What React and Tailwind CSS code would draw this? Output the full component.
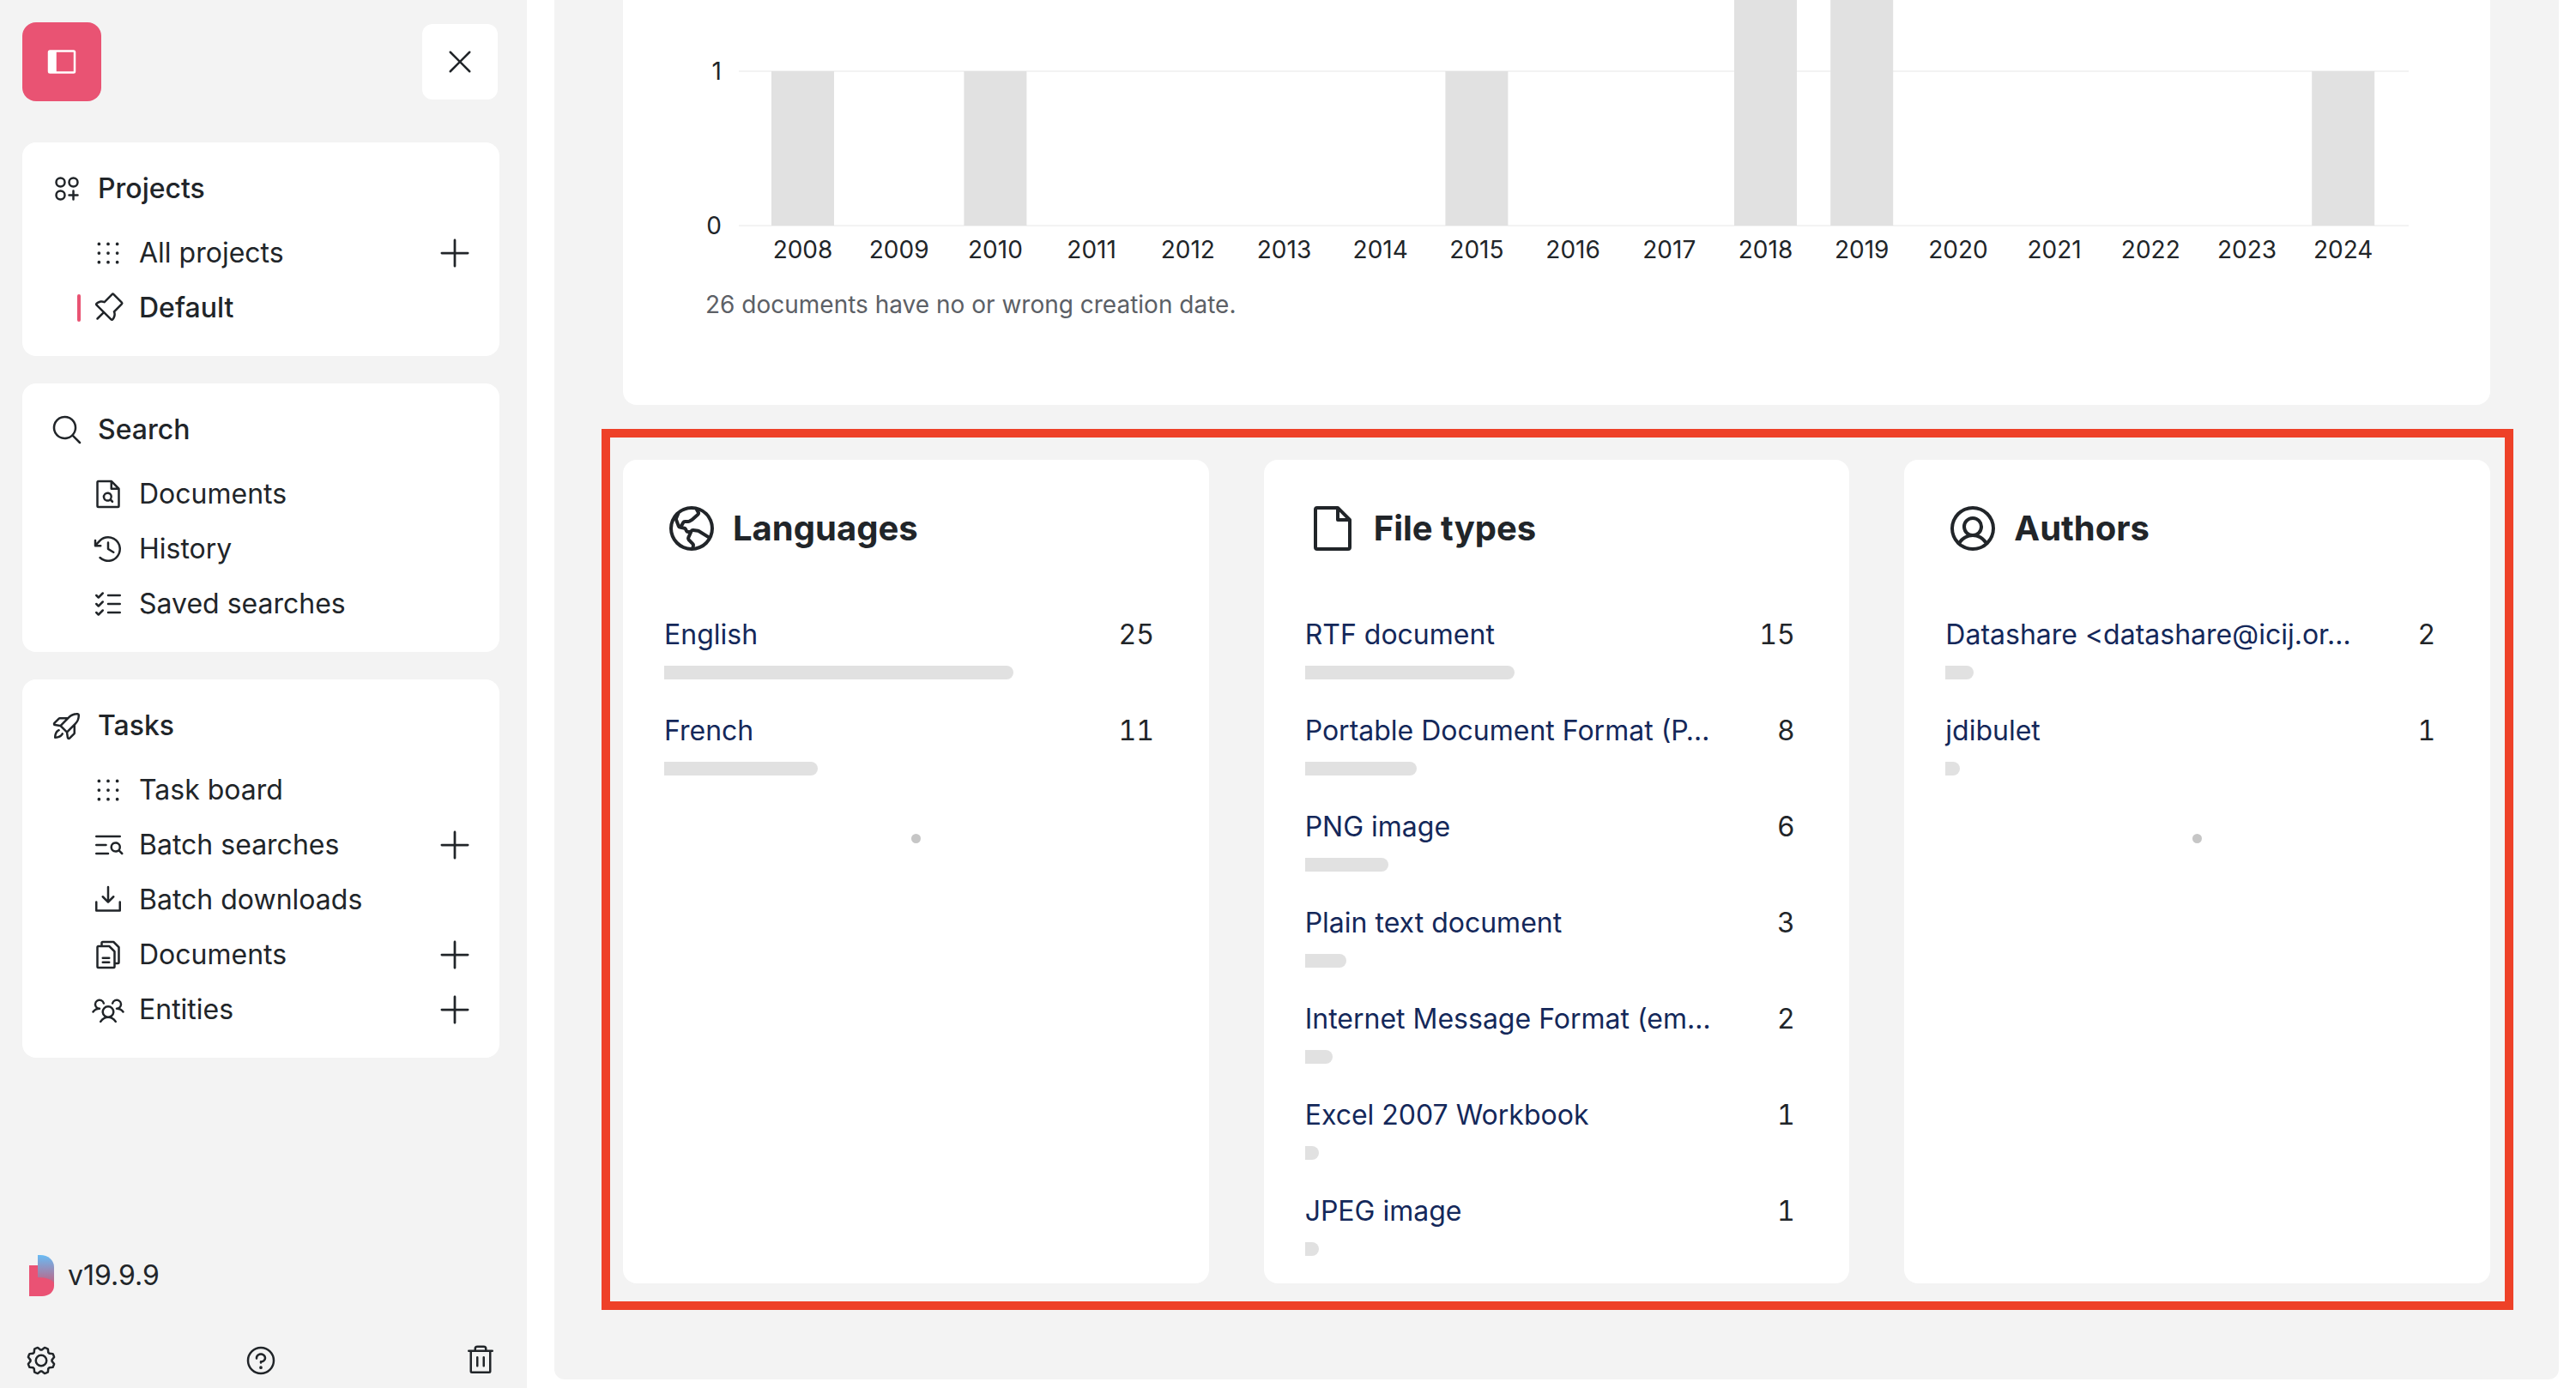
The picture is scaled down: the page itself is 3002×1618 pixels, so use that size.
import React from 'react';
import {
  PiCirclesThreePlus,
  PiClockCounterClockwise,
  PiDotsNine,
  PiDownloadSimple,
  PiFile,
  PiFileMagnifyingGlass,
  PiFiles,
  PiGear,
  PiGlobeHemisphereWest,
  PiListChecks,
  PiListMagnifyingGlass,
  PiMagnifyingGlass,
  PiPlus,
  PiPushPin,
  PiQuestion,
  PiRocketLaunch,
  PiSidebarSimpleFill,
  PiTrash,
  PiUserCircle,
  PiUsersThree,
  PiX,
} from 'react-icons/pi';

const navGroups = [
  {
    title: 'Projects',
    icon: PiCirclesThreePlus,
    items: [
      { label: 'All projects', icon: PiDotsNine, add: true },
      { label: 'Default', icon: PiPushPin, active: true },
    ],
  },
  {
    title: 'Search',
    icon: PiMagnifyingGlass,
    items: [
      { label: 'Documents', icon: PiFileMagnifyingGlass },
      { label: 'History', icon: PiClockCounterClockwise },
      { label: 'Saved searches', icon: PiListChecks },
    ],
  },
  {
    title: 'Tasks',
    icon: PiRocketLaunch,
    items: [
      { label: 'Task board', icon: PiDotsNine },
      { label: 'Batch searches', icon: PiListMagnifyingGlass, add: true },
      { label: 'Batch downloads', icon: PiDownloadSimple },
      { label: 'Documents', icon: PiFiles, add: true },
      { label: 'Entities', icon: PiUsersThree, add: true },
    ],
  },
];

const TOTAL = 36;

const widgets = [
  {
    title: 'Languages',
    icon: PiGlobeHemisphereWest,
    more: true,
    rows: [
      ['English', 25],
      ['French', 11],
    ],
  },
  {
    title: 'File types',
    icon: PiFile,
    rows: [
      ['RTF document', 15],
      ['Portable Document Format (P…', 8],
      ['PNG image', 6],
      ['Plain text document', 3],
      ['Internet Message Format (em…', 2],
      ['Excel 2007 Workbook', 1],
      ['JPEG image', 1],
    ],
  },
  {
    title: 'Authors',
    icon: PiUserCircle,
    more: true,
    rows: [
      ['Datashare <datashare@icij.or…', 2],
      ['jdibulet', 1],
    ],
  },
];

const years = Array.from({ length: 17 }, (_, i) => 2008 + i);
const yearValues = { 2008: 1, 2010: 1, 2015: 1, 2018: 2, 2019: 2, 2024: 1 };

const Logo = () => (
  <svg width="29" height="48" viewBox="0 0 29 48">
    <defs>
      <linearGradient id="logoBlue" x1="0" y1="0" x2="0" y2="1">
        <stop offset="0" stopColor="#68bcf5" />
        <stop offset="1" stopColor="#c2607f" />
      </linearGradient>
    </defs>
    <path d="M10 0h3c9 0 16 6 16 14v20H10z" fill="url(#logoBlue)" />
    <path d="M0 12h10v14c10 0 19 3 19 8v2c0 7-6 12-14 12H0z" fill="#ea5274" />
  </svg>
);

const NavGroup = ({ group }) => {
  const Icon = group.icon;
  return (
    <div className="rounded-2xl bg-white pt-[22px] pr-[30px] pb-6 pl-8">
      <div className="flex h-16 items-center gap-4 font-medium">
        <Icon size={40} />
        <span>{group.title}</span>
      </div>
      <div className="mt-[11px]">
        {group.items.map((item) => (
          <div key={item.label} className="flex h-16 items-center pl-8">
            <div className="w-4">
              {item.active && <div className="h-8 w-1 rounded-sm bg-[#e95373]" />}
            </div>
            <item.icon size={40} />
            <span className={`ml-4 ${item.active ? 'font-medium' : ''}`}>{item.label}</span>
            {item.add && <PiPlus size={44} className="ml-auto" />}
          </div>
        ))}
      </div>
    </div>
  );
};

const Sidebar = () => (
  <aside className="flex h-[1618px] w-[614px] shrink-0 flex-col bg-[#f3f3f3] pt-[26px] pr-8 pb-3 pl-[26px]">
    <div className="flex items-center justify-between pr-0.5">
      <button className="flex h-[92px] w-[92px] items-center justify-center rounded-2xl bg-[#e95373] text-white">
        <PiSidebarSimpleFill size={40} />
      </button>
      <button className="flex h-[88px] w-[88px] items-center justify-center rounded-xl bg-white">
        <PiX size={40} />
      </button>
    </div>
    <div className="mt-12 flex flex-col gap-8">
      {navGroups.map((group) => (
        <NavGroup key={group.title} group={group} />
      ))}
    </div>
    <div className="mt-auto">
      <div className="flex items-center gap-4 pl-2">
        <Logo />
        <span>v19.9.9</span>
      </div>
      <div className="mt-[55px] flex justify-between px-0.5">
        <PiGear size={40} />
        <PiQuestion size={40} />
        <PiTrash size={40} />
      </div>
    </div>
  </aside>
);

const ChartCard = () => (
  <div className="h-[472px] rounded-b-2xl bg-white">
    <svg width="2176" height="320" className="block text-[28px]" fill="#212529">
      <line x1="135" x2="2081" y1="83" y2="83" stroke="#f3f3f3" strokeWidth="2" />
      <line x1="135" x2="2081" y1="263" y2="263" stroke="#f3f3f3" strokeWidth="2" />
      <text x="115" y="93" textAnchor="end">1</text>
      <text x="115" y="273" textAnchor="end">0</text>
      {years.map((year, i) => {
        const x = 173 + i * 112.2;
        const height = (yearValues[year] || 0) * 180;
        return (
          <g key={year}>
            {height > 0 && <rect x={x} y={263 - height} width="73" height={height} fill="#e1e1e1" />}
            <text x={x + 36.5} y="301" textAnchor="middle">{year}</text>
          </g>
        );
      })}
    </svg>
    <p className="mt-[15px] pl-24 text-[28px] leading-10 text-[#5c6066]">
      26 documents have no or wrong creation date.
    </p>
  </div>
);

const WidgetRow = ({ label, count }) => (
  <div className="w-[586px]">
    <div className="flex h-12 items-center pt-0.5">
      <span className="w-[478px] whitespace-nowrap text-[#14285a]">{label}</span>
      <span className="flex-1 pr-[15px] text-right tabular-nums">{count}</span>
    </div>
    <div
      className="mt-[13px] h-4 rounded-r-lg bg-[#e1e1e1]"
      style={{ width: `${(count / TOTAL) * 100}%` }}
    />
  </div>
);

const Widget = ({ widget }) => {
  const Icon = widget.icon;
  return (
    <div className="h-[960px] rounded-2xl bg-white pt-12 pl-12">
      <div className="flex items-center gap-4">
        <Icon size={64} />
        <h2 className="text-[40px] font-bold">{widget.title}</h2>
      </div>
      <div className="mt-[67px] flex flex-col gap-[35px]">
        {widget.rows.map(([label, count]) => (
          <WidgetRow key={label} label={label} count={count} />
        ))}
      </div>
      {widget.more && <div className="mt-[68px] ml-[288px] size-[11px] rounded-full bg-[#c6c6c6]" />}
    </div>
  );
};

const App = () => (
  <div className="flex h-[1618px] w-[3002px] overflow-hidden bg-white font-['Inter',sans-serif] text-[32px] text-[#212529]">
    <Sidebar />
    <main className="ml-8 h-[1608px] w-[2336px] overflow-hidden rounded-b-xl bg-[#f3f3f3] px-20">
      <ChartCard />
      <div className="mt-7 -ml-[25px] grid w-[2228px] grid-cols-3 gap-16 border-10 border-[#ee4128] pt-[26px] pr-[17px] pb-[21px] pl-[15px]">
        {widgets.map((widget) => (
          <Widget key={widget.title} widget={widget} />
        ))}
      </div>
    </main>
  </div>
);

export default App;
